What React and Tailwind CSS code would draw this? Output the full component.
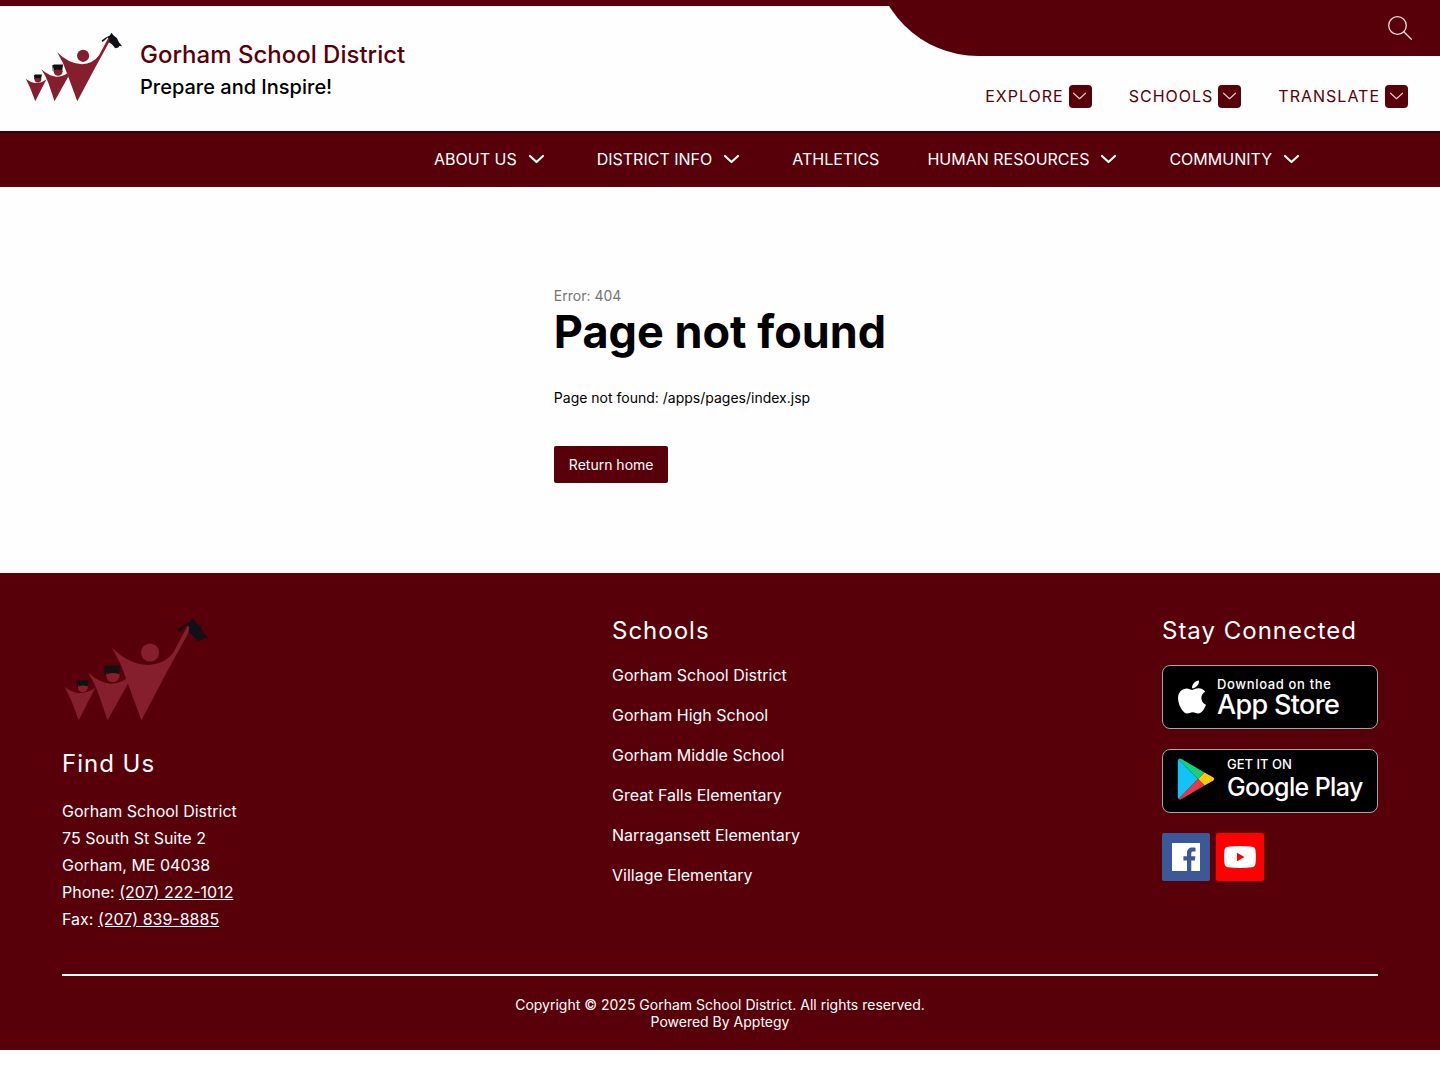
import React from "react";
import { FaApple } from "react-icons/fa";

function Logo({ className }) {
  return (
    <svg viewBox="38 52 436 310" className={className} role="img" aria-label="Gorham School District logo">
      <g fill="#861f2d">
        <path d="M186 142Q236 193 295 195Q345 194 372 156L414 76L424 84L352 215L275 360L230 238Q214 188 186 142Z" />
        <path d="M115 218Q150 249 182 251Q212 251 230 236L236 249L174 360L146 278Q134 246 115 218Z" />
        <path d="M46 260Q68 279 94 279Q120 278 138 262L88 360L66 302Z" />
        <circle cx="301" cy="158" r="27" />
        <circle cx="190" cy="227" r="20" />
        <circle cx="100" cy="262" r="15" />
      </g>
      <g fill="#111014">
        <path d="M164 200L172 197H212L208 222Q190 216 172 222L169 206V226H166Z" />
        <path d="M82 244L88 241H118L114 259Q100 254 88 259L86 248V262H83Z" />
        <path d="M383 90L402 76L420 68L427 55L437 68L452 80L460 98L475 116L462 114L458 121L444 124L430 108L416 98L418 82L410 76L394 92L386 97Z" />
      </g>
    </svg>
  );
}

function Chevron({ className, strokeWidth }) {
  return (
    <svg viewBox="0 0 24 24" className={className} fill="none" stroke="currentColor" strokeWidth={strokeWidth} strokeLinecap="round" strokeLinejoin="round" aria-hidden="true">
      <path d="M5 9L11.5 15L18 9" />
    </svg>
  );
}

const quickMenus = ["EXPLORE", "SCHOOLS", "TRANSLATE"];
const navItems = [
  { label: "ABOUT US", menu: true },
  { label: "DISTRICT INFO", menu: true },
  { label: "ATHLETICS", menu: false },
  { label: "HUMAN RESOURCES", menu: true },
  { label: "COMMUNITY", menu: true },
];
const schools = [
  "Gorham School District",
  "Gorham High School",
  "Gorham Middle School",
  "Great Falls Elementary",
  "Narragansett Elementary",
  "Village Elementary",
];

function Header() {
  return (
    <header>
      <div className="flex justify-between overflow-hidden border-t-[6px] border-[#580009]">
        <a href="#" className="flex items-center gap-[18px] pb-1 pl-6">
          <Logo className="w-[98px] shrink-0" />
          <span className="flex flex-col pt-2">
            <span className="text-2xl leading-8 font-medium text-[#580009]">Gorham School District</span>
            <span className="text-xl leading-8 font-medium text-black">Prepare and Inspire!</span>
          </span>
        </a>
        <div className="flex w-[566px] flex-col">
          <div className="-mt-14 flex h-[106px] items-end justify-end rounded-bl-[104px] bg-[#580009] pr-7 pb-4">
            <button type="button" aria-label="Search" className="text-[#f3d9db]">
              <svg viewBox="0 0 24 24" className="size-6" fill="none" stroke="currentColor" strokeWidth="1.3" strokeLinecap="round" aria-hidden="true">
                <circle cx="9.5" cy="9.5" r="8.8" />
                <path d="M15.8 15.8L23.3 23.3" />
              </svg>
            </button>
          </div>
          <div className="flex justify-end gap-[37px] pt-7 pr-8 pb-[23px]">
            {quickMenus.map((label) => (
              <button key={label} type="button" className="flex items-center gap-[5px] text-base leading-6 tracking-[1px] text-[#580009]">
                {label}
                <span className="flex size-[23px] items-center justify-center rounded bg-[#580009] text-[#e8c4c8]">
                  <Chevron className="size-[22px]" strokeWidth="1.3" />
                </span>
              </button>
            ))}
          </div>
        </div>
      </div>
      <nav className="flex h-14 items-center justify-end gap-12 border-t-2 border-[#2e0508] bg-[#580009] pr-34 pb-0.5 text-base text-white">
        {navItems.map(({ label, menu }) =>
          menu ? (
            <button key={label} type="button" className="flex items-center gap-2">
              {label}
              <Chevron className="size-6" strokeWidth="2.2" />
            </button>
          ) : (
            <a key={label} href="#">{label}</a>
          )
        )}
      </nav>
    </header>
  );
}

function StoreBadges() {
  return (
    <div className="flex flex-col gap-5">
      <a href="#" className="flex h-16 items-center gap-1.5 rounded-lg border border-[#a6a6a6] bg-black pl-2.5 text-white">
        <FaApple className="size-[38px]" aria-hidden="true" />
        <span className="flex flex-col">
          <span className="text-[13px] leading-4 font-medium tracking-wider">Download on the</span>
          <span className="text-[27px] leading-[26px] font-medium tracking-tight">App Store</span>
        </span>
      </a>
      <a href="#" className="flex h-16 items-center gap-3 rounded-lg border border-[#a6a6a6] bg-black pl-[14px] text-white">
        <svg viewBox="0 0 38 42" className="mb-1 h-[42px] w-[38px]" aria-hidden="true">
          <path d="M1.5 1L21 21L1.5 41Q.8 40.5 .8 39V3Q.8 1.5 1.5 1Z" fill="#12c3fa" />
          <path d="M1.5 1Q2.5 0 4.5 1L27.5 14.5L21 21Z" fill="#13d277" />
          <path d="M27.5 14.5L36 19.3Q38.5 21 36 22.7L27.5 27.5L21 21Z" fill="#fdc70c" />
          <path d="M21 21L27.5 27.5L4.5 41Q2.5 42 1.5 41Z" fill="#e53a4c" />
        </svg>
        <span className="flex flex-col pb-1">
          <span className="text-[13px] leading-4 font-medium">GET IT ON</span>
          <span className="text-[25px] leading-[30px] font-medium tracking-tight">Google Play</span>
        </span>
      </a>
    </div>
  );
}

function Footer() {
  return (
    <footer className="bg-[#580009] px-[62px] pt-11 pb-5 text-white">
      <div className="grid grid-cols-[1fr_1fr_216px]">
        <section>
          <Logo className="w-[146px]" />
          <h2 className="mt-[27px] text-2xl leading-8 tracking-[1px]">Find Us</h2>
          <address className="mt-[18px] text-base leading-[27px] not-italic">
            <p>Gorham School District</p>
            <p>75 South St Suite 2</p>
            <p>Gorham, ME 04038</p>
            <p>Phone: <a href="tel:2072221012" className="underline">(207) 222-1012</a></p>
            <p>Fax: <a href="tel:2078398885" className="underline">(207) 839-8885</a></p>
          </address>
        </section>
        <section>
          <h2 className="text-2xl leading-7 tracking-[1px]">Schools</h2>
          <ul className="mt-[18px] flex flex-col gap-4 text-base leading-6">
            {schools.map((name) => (
              <li key={name}><a href="#">{name}</a></li>
            ))}
          </ul>
        </section>
        <section>
          <h2 className="mb-5 text-2xl leading-7 tracking-[1px]">Stay Connected</h2>
          <StoreBadges />
          <div className="mt-5 flex gap-1.5">
            <a href="#" aria-label="Facebook" className="flex size-12 items-center justify-center rounded-xs bg-[#3b5998]">
              <svg viewBox="0 0 28 28" className="size-7" aria-hidden="true">
                <path d="M0 0H28V28H19.3V17.4H22.9L23.4 13.2H19.3V10.6C19.3 9.2 19.8 8.6 21.3 8.6H23.5V4.7C23 4.6 21.8 4.5 20.4 4.5C17.1 4.5 15 6.4 15 9.9V13.2H11.4V17.4H15V28H0Z" fill="#fff" />
              </svg>
            </a>
            <a href="#" aria-label="YouTube" className="flex size-12 items-center justify-center rounded-xs bg-[#ff0000]">
              <svg viewBox="0 0 32 22" className="h-[22px] w-8" aria-hidden="true">
                <path d="M4 .7Q16 -.5 28 .7Q31 1 31.4 4Q32.4 11 31.4 18Q31 21 28 21.3Q16 22.5 4 21.3Q1 21 .6 18Q-.4 11 .6 4Q1 1 4 .7Z" fill="#fff" />
                <path d="M13 6.7L20.5 11L13 15.3Z" fill="#f00" />
              </svg>
            </a>
          </div>
        </section>
      </div>
      <div className="mt-[41px] border-t-2 border-white pt-5 text-center text-sm leading-[17px]">
        <p>Copyright © 2025 Gorham School District. All rights reserved.</p>
        <p>Powered By <a href="#">Apptegy</a></p>
      </div>
    </footer>
  );
}

export default function App() {
  return (
    <div className="bg-[#fefefe] font-['Inter',sans-serif] text-black">
      <Header />
      <main className="flex justify-center pt-[100px] pb-[90px]">
        <div>
          <p className="text-sm leading-[18px] text-[#757575]">Error: 404</p>
          <h1 className="text-[45px] leading-[54px] font-bold">Page not found</h1>
          <p className="mt-[30px] text-sm leading-[18px]">Page not found: /apps/pages/index.jsp</p>
          <a href="#" className="mt-[39px] inline-block rounded-xs bg-[#580009] px-[15px] py-2 text-sm leading-[21px] text-white">Return home</a>
        </div>
      </main>
      <Footer />
    </div>
  );
}
